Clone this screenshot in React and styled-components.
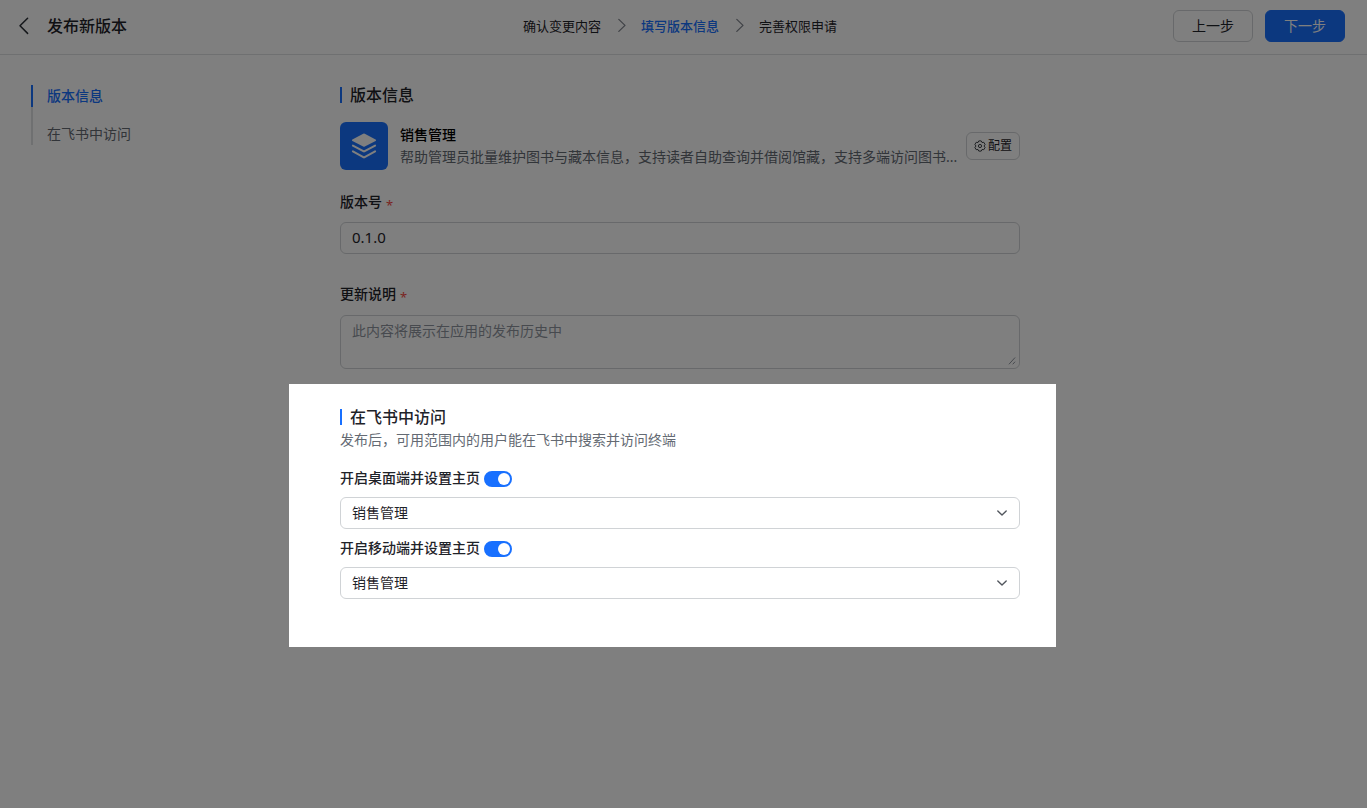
import React, { useState } from 'react';
import styled, { createGlobalStyle } from 'styled-components';

const GlobalStyle = createGlobalStyle`
  *, *::before, *::after { box-sizing: border-box; }
  body {
    margin: 0;
    background: #fff;
    color: #1f2329;
    font-family: "Noto Sans", "Noto Sans CJK SC", sans-serif;
    font-size: 14px;
    line-height: 22px;
  }
  button, input, textarea, select { font: inherit; color: inherit; }
`;

const Page = styled.div`
  min-height: 100vh;
  position: relative;
  overflow: hidden;
`;

const Header = styled.header`
  display: grid;
  grid-template-columns: 1fr auto 1fr;
  align-items: center;
  height: 55px;
  padding: 0 22px 3px 15px;
  border-bottom: 1px solid #dee0e3;
`;

const TitleGroup = styled.div`
  display: flex;
  align-items: center;
  gap: 14px;
`;

const BackButton = styled.button`
  display: flex;
  padding: 0;
  border: 0;
  background: none;
  cursor: pointer;
`;

const PageTitle = styled.h1`
  margin: 0;
  font-size: 16px;
  line-height: 24px;
  font-weight: 500;
`;

const Steps = styled.ol`
  display: flex;
  align-items: center;
  gap: 12px;
  margin: 0;
  padding: 0;
  list-style: none;
  font-size: 13px;
`;

const Step = styled.li`
  display: flex;
  align-items: center;
  gap: 12px;
  color: ${(p) => (p.$active ? '#1870ff' : '#1f2329')};
  font-weight: ${(p) => (p.$active ? 500 : 400)};
`;

const Actions = styled.div`
  display: flex;
  justify-content: flex-end;
  gap: 12px;
`;

const Button = styled.button`
  width: 80px;
  height: 32px;
  padding: 0;
  border: 1px solid ${(p) => (p.$primary ? '#1870ff' : '#d0d3d6')};
  border-radius: 6px;
  background: ${(p) => (p.$primary ? '#1870ff' : '#fff')};
  color: ${(p) => (p.$primary ? '#fff' : '#1f2329')};
  cursor: pointer;
`;

const Body = styled.div`
  display: grid;
  grid-template-columns: 1fr minmax(0, 680px) 1fr;
  padding: 28px 7px 80px 0;
`;

const SideNav = styled.nav`
  display: flex;
  flex-direction: column;
  align-items: flex-start;
  padding: 2px 0 0 31px;
`;

const NavLink = styled.a`
  padding: ${(p) => (p.$active ? 0 : '16px')} 0 0 14px;
  border-left: 2px solid ${(p) => (p.$active ? '#1870ff' : '#dee0e3')};
  color: ${(p) => (p.$active ? '#1870ff' : '#646a73')};
  font-weight: ${(p) => (p.$active ? 500 : 400)};
  text-decoration: none;
`;

const Content = styled.main`
  min-width: 0;
`;

const SectionTitle = styled.h2`
  display: flex;
  align-items: center;
  gap: 8px;
  margin: 0;
  font-size: 16px;
  line-height: 24px;
  font-weight: 500;

  &::before {
    content: "";
    width: 2px;
    height: 16px;
    background: #1870ff;
  }
`;

const AppRow = styled.div`
  display: flex;
  align-items: center;
  gap: 12px;
  margin: 15px 0 21px;
`;

const AppLogo = styled.div`
  display: flex;
  align-items: center;
  justify-content: center;
  flex: none;
  width: 48px;
  height: 48px;
  border-radius: 6px;
  background: #1870ff;
`;

const AppInfo = styled.div`
  flex: 1;
  min-width: 0;
`;

const AppName = styled.div`
  font-weight: 500;
  color: #000;
`;

const AppDescription = styled.div`
  color: #646a73;
  white-space: nowrap;
  overflow: hidden;
  text-overflow: ellipsis;
`;

const ConfigButton = styled.button`
  display: flex;
  align-items: center;
  justify-content: center;
  gap: 2px;
  flex: none;
  width: 54px;
  height: 28px;
  margin-left: -4px;
  padding: 0;
  border: 1px solid #d0d3d6;
  border-radius: 6px;
  background: #fff;
  font-size: 12px;
  cursor: pointer;
`;

const Form = styled.div`
  display: flex;
  flex-direction: column;
  gap: 29px;
`;

const Field = styled.div`
  display: flex;
  flex-direction: column;
`;

const Label = styled.label`
  font-weight: 500;
`;

const Required = styled.span`
  margin-left: 4px;
  color: #f54a45;
  font-size: 13px;
  line-height: 1;
  font-weight: 400;
  vertical-align: -3px;
`;

const TextInput = styled.input`
  width: 100%;
  height: 32px;
  margin-top: 9px;
  padding: 0 11px 2px;
  border: 1px solid #d0d3d6;
  border-radius: 6px;
  background: #fff;
  font-size: 15px;
`;

const TextAreaBox = styled.div`
  display: grid;
  margin-top: 10px;

  & > * { grid-area: 1 / 1; }
  & > svg { place-self: end; margin: 0 4px 4px 0; pointer-events: none; }
`;

const TextArea = styled.textarea`
  display: block;
  width: 100%;
  height: 54px;
  padding: 4px 11px;
  border: 1px solid #d0d3d6;
  border-radius: 6px;
  background: #fff;
  resize: none;

  &::placeholder { color: #8f959e; opacity: 1; }
`;

const Spotlight = styled.section`
  position: relative;
  margin-top: 36px;

  &::before {
    content: "";
    position: absolute;
    z-index: 1;
    inset: -21px -36px -48px -51px;
    box-shadow: 0 0 0 4000px rgba(0, 0, 0, 0.5);
    pointer-events: none;
  }
`;

const Hint = styled.p`
  margin: 0 0 16px;
  color: #646a73;
`;

const SwitchRow = styled.div`
  display: flex;
  align-items: center;
  gap: 4px;
  margin: 8px 0;
`;

const Switch = styled.input`
  appearance: none;
  display: flex;
  align-items: center;
  width: 28px;
  height: 16px;
  margin: 1px 0 0;
  padding: 0 2px;
  border-radius: 8px;
  background: ${(p) => (p.checked ? '#1870ff' : '#bbbfc4')};
  justify-content: ${(p) => (p.checked ? 'flex-end' : 'flex-start')};
  cursor: pointer;

  &::before {
    content: "";
    width: 12px;
    height: 12px;
    border-radius: 50%;
    background: #fff;
  }
`;

const SelectBox = styled.div`
  display: grid;
  align-items: center;

  & > * { grid-area: 1 / 1; }
  & > svg { justify-self: end; margin-right: 12px; pointer-events: none; }
`;

const Select = styled.select`
  appearance: none;
  width: 100%;
  height: 32px;
  padding: 0 32px 0 11px;
  border: 1px solid #d0d3d6;
  border-radius: 6px;
  background: #fff;
`;

function BackIcon() {
  return (
    <svg width="18" height="18" viewBox="0 0 18 18" fill="none" stroke="#2b2f36" strokeWidth="1.5" strokeLinecap="round" strokeLinejoin="round" aria-hidden="true">
      <path d="M12.6 1.2 5 8.800l7.600 7.600" />
    </svg>
  );
}

function StepArrow() {
  return (
    <svg width="16" height="16" viewBox="0 0 16 16" fill="none" stroke="#80858e" strokeWidth="1.3" strokeLinecap="round" strokeLinejoin="round" aria-hidden="true">
      <path d="m5.800 1.400 6.200 6-6.200 6" />
    </svg>
  );
}

function StackIcon() {
  return (
    <svg width="28" height="28" viewBox="0 0 28 28" aria-hidden="true">
      <path d="M13.200 1.800a1.800 1.800 0 0 1 1.600 0L25.600 7.600a.8.8 0 0 1 0 1.400L14.800 14.600a1.800 1.800 0 0 1-1.600 0L2.400 9a.8.8 0 0 1 0-1.400z" fill="#fff" />
      <path d="m2.900 13.600 10.400 5.600a1.600 1.600 0 0 0 1.400 0l10.400-5.600M2.900 19.400 13.300 25.200a1.600 1.600 0 0 0 1.400 0l10.400-5.800" fill="none" stroke="#fff" strokeWidth="2" strokeLinecap="round" />
    </svg>
  );
}

function GearIcon() {
  return (
    <svg width="12" height="12" viewBox="0 0 12 12" fill="none" stroke="#2b2f36" strokeWidth="0.9" strokeLinejoin="round" aria-hidden="true">
      <path d="M4.800.9h2.400l.8 1.600 1.800-.2 1.300 2.200L10 6l1.100 1.500-1.300 2.200L8 9.500l-.8 1.600H4.800L4 9.500l-1.800.2L.9 7.500 2 6 .9 4.500l1.300-2.200L4 2.500z" />
      <circle cx="6" cy="6" r="1.600" />
    </svg>
  );
}

function ResizeGrip() {
  return (
    <svg width="8" height="8" viewBox="0 0 8 8" fill="none" stroke="#8f959e" strokeWidth="1" strokeLinecap="round" aria-hidden="true">
      <path d="M1.200 7 6.800.8M5 7l1.800-2" />
    </svg>
  );
}

function ChevronDown() {
  return (
    <svg width="12" height="12" viewBox="0 0 12 12" fill="none" stroke="#51565d" strokeWidth="1.4" strokeLinecap="round" strokeLinejoin="round" aria-hidden="true">
      <path d="m1.800 4.100 4.200 4 4.200-4" />
    </svg>
  );
}

function HomeSetting({ id, label }) {
  const [on, setOn] = useState(true);
  return (
    <>
      <SwitchRow>
        <Label htmlFor={`${id}-switch`}>{label}</Label>
        <Switch id={`${id}-switch`} type="checkbox" role="switch" checked={on} onChange={(e) => setOn(e.target.checked)} />
      </SwitchRow>
      <SelectBox>
        <Select aria-label={label} disabled={!on} defaultValue="sales">
          <option value="sales">销售管理</option>
        </Select>
        <ChevronDown />
      </SelectBox>
    </>
  );
}

export default function App() {
  return (
    <Page>
      <GlobalStyle />
      <Header>
        <TitleGroup>
          <BackButton type="button" aria-label="返回"><BackIcon /></BackButton>
          <PageTitle>发布新版本</PageTitle>
        </TitleGroup>
        <Steps>
          <Step>确认变更内容<StepArrow /></Step>
          <Step $active aria-current="step">填写版本信息<StepArrow /></Step>
          <Step>完善权限申请</Step>
        </Steps>
        <Actions>
          <Button type="button">上一步</Button>
          <Button type="button" $primary>下一步</Button>
        </Actions>
      </Header>
      <Body>
        <SideNav>
          <NavLink href="#version" $active>版本信息</NavLink>
          <NavLink href="#access">在飞书中访问</NavLink>
        </SideNav>
        <Content>
          <section id="version">
            <SectionTitle>版本信息</SectionTitle>
            <AppRow>
              <AppLogo><StackIcon /></AppLogo>
              <AppInfo>
                <AppName>销售管理</AppName>
                <AppDescription>帮助管理员批量维护图书与藏本信息，支持读者自助查询并借阅馆藏，支持多端访问图书...</AppDescription>
              </AppInfo>
              <ConfigButton type="button"><GearIcon />配置</ConfigButton>
            </AppRow>
            <Form>
              <Field>
                <Label htmlFor="version-number">版本号<Required>*</Required></Label>
                <TextInput id="version-number" type="text" defaultValue="0.1.0" />
              </Field>
              <Field>
                <Label htmlFor="release-notes">更新说明<Required>*</Required></Label>
                <TextAreaBox>
                  <TextArea id="release-notes" placeholder="此内容将展示在应用的发布历史中" />
                  <ResizeGrip />
                </TextAreaBox>
              </Field>
            </Form>
          </section>
          <Spotlight id="access">
            <SectionTitle>在飞书中访问</SectionTitle>
            <Hint>发布后，可用范围内的用户能在飞书中搜索并访问终端</Hint>
            <HomeSetting id="desktop" label="开启桌面端并设置主页" />
            <HomeSetting id="mobile" label="开启移动端并设置主页" />
          </Spotlight>
        </Content>
      </Body>
    </Page>
  );
}
